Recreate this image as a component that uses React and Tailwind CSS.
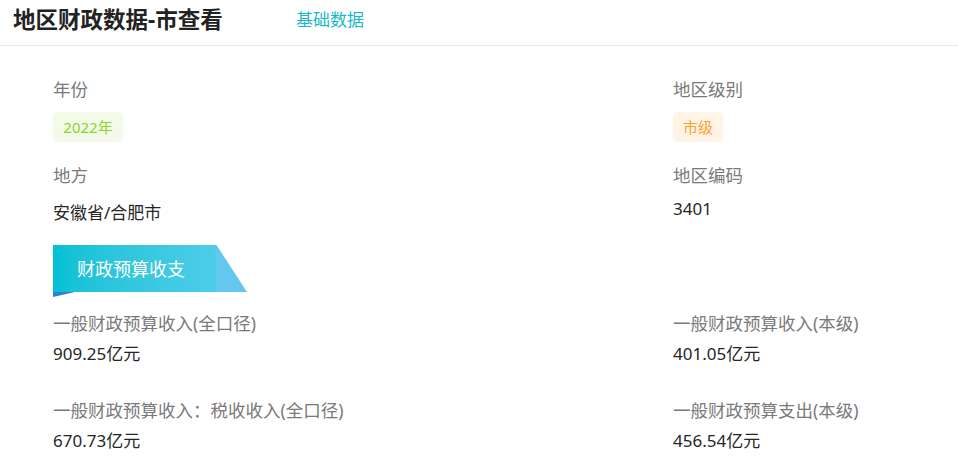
export default function App() {
  const font = "font-['Noto_Sans','Noto_Sans_CJK_SC',sans-serif]";
  const Label = ({ children }) => (
    <div className="text-[17.5px] leading-[24px] text-[#7a7a7a]">{children}</div>
  );
  const Value = ({ children }) => (
    <div className="text-[17px] leading-[24px] text-[#262626]">{children}</div>
  );
  return (
    <div className={`w-[958px] h-[474px] bg-white overflow-hidden ${font}`}>
      <div className="h-[46px] border-b border-[#e8e8e8] flex items-center pl-[13px] pb-[6px]">
        <div className="text-[22.5px] font-bold text-[#222] leading-[28px] w-[283px]">地区财政数据-市查看</div>
        <div className="text-[17px] text-[#17b8cb] leading-[24px]">基础数据</div>
      </div>
      <div className="px-[53px] pt-[31px]">
        <div className="grid grid-cols-[620px_1fr]">
          <div>
            <Label>年份</Label>
            <div className="mt-[11px] inline-flex items-center justify-center w-[70px] h-[30px] rounded-[5px] bg-[#f3fae9] text-[15px] text-[#8bd42c]">2022年</div>
            <div className="mt-[21px]"><Label>地方</Label></div>
            <div className="mt-[14px]"><Value>安徽省/合肥市</Value></div>
          </div>
          <div>
            <Label>地区级别</Label>
            <div className="mt-[11px] inline-flex items-center justify-center w-[50px] h-[30px] rounded-[5px] bg-[#fff4e6] text-[15px] text-[#ff9f2d]">市级</div>
            <div className="mt-[21px]"><Label>地区编码</Label></div>
            <div className="mt-[10px]"><Value>3401</Value></div>
          </div>
        </div>
        <div className="mt-[20px] relative w-[194px] h-[52px]">
          <div className="flex h-[47px]">
            <div className="w-[163px] h-[47px] bg-gradient-to-r from-[#00c1d4] to-[#4ccde9] flex items-center pl-[24px] text-white text-[18px] leading-[24px]">财政预算收支</div>
            <svg width="31" height="47" viewBox="0 0 31 47" className="block">
              <polygon points="0,0 0.5,0 31,47 0,47" fill="#64c8ee" />
            </svg>
          </div>
          <svg width="24" height="5" viewBox="0 0 24 5" className="block">
            <polygon points="0,0 22,0 0,5" fill="#2f7fd0" />
          </svg>
        </div>
        <div className="mt-[14px] grid grid-cols-[620px_1fr]">
          <div>
            <Label>一般财政预算收入(全口径)</Label>
            <div className="mt-[7px]"><Value>909.25亿元</Value></div>
            <div className="mt-[32px]"><Label>一般财政预算收入：税收收入(全口径)</Label></div>
            <div className="mt-[7px]"><Value>670.73亿元</Value></div>
          </div>
          <div>
            <Label>一般财政预算收入(本级)</Label>
            <div className="mt-[7px]"><Value>401.05亿元</Value></div>
            <div className="mt-[32px]"><Label>一般财政预算支出(本级)</Label></div>
            <div className="mt-[7px]"><Value>456.54亿元</Value></div>
          </div>
        </div>
      </div>
    </div>
  );
}
